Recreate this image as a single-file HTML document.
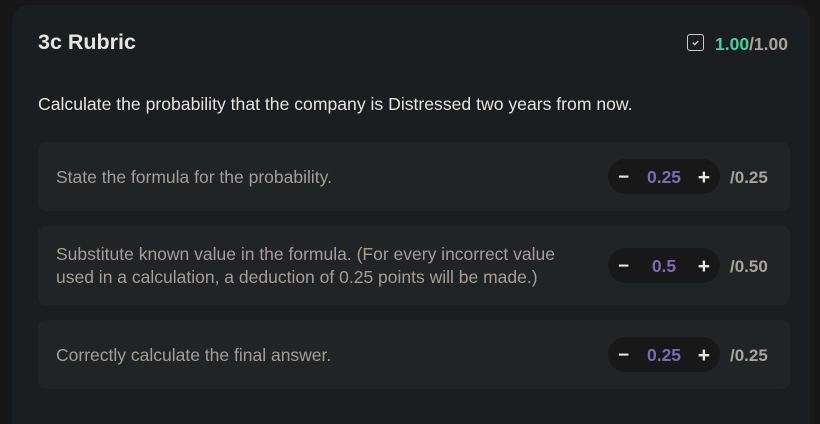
<!DOCTYPE html>
<html><head><style>
html,body{margin:0;width:820px;height:424px;overflow:hidden}
body{background:#171718;font-family:"Liberation Sans",sans-serif;position:relative}
.card{position:absolute;left:12px;top:5px;width:798px;height:440px;background:#1c1d1f;border-radius:16px}
.title{position:absolute;left:26px;top:25px;font-size:21.5px;font-weight:bold;color:#e6e4e0}
.score{position:absolute;right:22px;top:29px;font-size:17.5px;font-weight:bold;color:#a8a39c}
.score .g{color:#3fd3a0}
.chk{position:absolute;left:-28px;top:0px;width:15px;height:15px;border:1.5px solid #cfcac4;border-radius:3px}
.q{position:absolute;left:26px;top:89px;font-size:17.6px;color:#e6e4e0}
.row{position:absolute;left:26px;width:752px;background:#222325;border-radius:8px}
.row .t{position:absolute;left:18px;font-size:17.5px;color:#a39e97;line-height:23px}
.pill{position:absolute;left:570px;width:112px;height:35px;background:#181819;border-radius:18px;font-weight:bold;font-size:17.5px}
.pill .m{position:absolute;left:10px;top:8px;color:#e6e4e0;font-size:19px}
.pill .v{position:absolute;left:0;right:0;text-align:center;top:8px;color:#7b6bb3}
.pill .p{position:absolute;right:10px;top:7px;color:#e6e4e0;font-size:21px}
.max{position:absolute;left:692px;font-size:17px;font-weight:bold;color:#a8a39c}
</style></head><body>
<div class="card">
<div class="title">3c Rubric</div>
<div class="score"><div class="chk"><svg width="15" height="15" viewBox="0 0 15 15" style="position:absolute;left:0;top:0"><path d="M4.8 7.8l1.9 1.8 3.5-3.5" stroke="#cfcac4" stroke-width="1.4" fill="none"/></svg></div><span class="g">1.00</span>/1.00</div>
<div class="q">Calculate the probability that the company is Distressed two years from now.</div>
<div class="row" style="top:137px;height:69px"><div class="t" style="top:24px">State the formula for the probability.</div>
<div class="pill" style="top:17px"><span class="m">−</span><span class="v">0.25</span><span class="p">+</span></div><div class="max" style="top:26px">/0.25</div></div>
<div class="row" style="top:221px;height:79px"><div class="t" style="top:17px">Substitute known value in the formula. (For every incorrect value<br>used in a calculation, a deduction of 0.25 points will be made.)</div>
<div class="pill" style="top:22px"><span class="m">−</span><span class="v">0.5</span><span class="p">+</span></div><div class="max" style="top:31px">/0.50</div></div>
<div class="row" style="top:315px;height:69px"><div class="t" style="top:24px">Correctly calculate the final answer.</div>
<div class="pill" style="top:17px"><span class="m">−</span><span class="v">0.25</span><span class="p">+</span></div><div class="max" style="top:26px">/0.25</div></div>
</div>
</body></html>
